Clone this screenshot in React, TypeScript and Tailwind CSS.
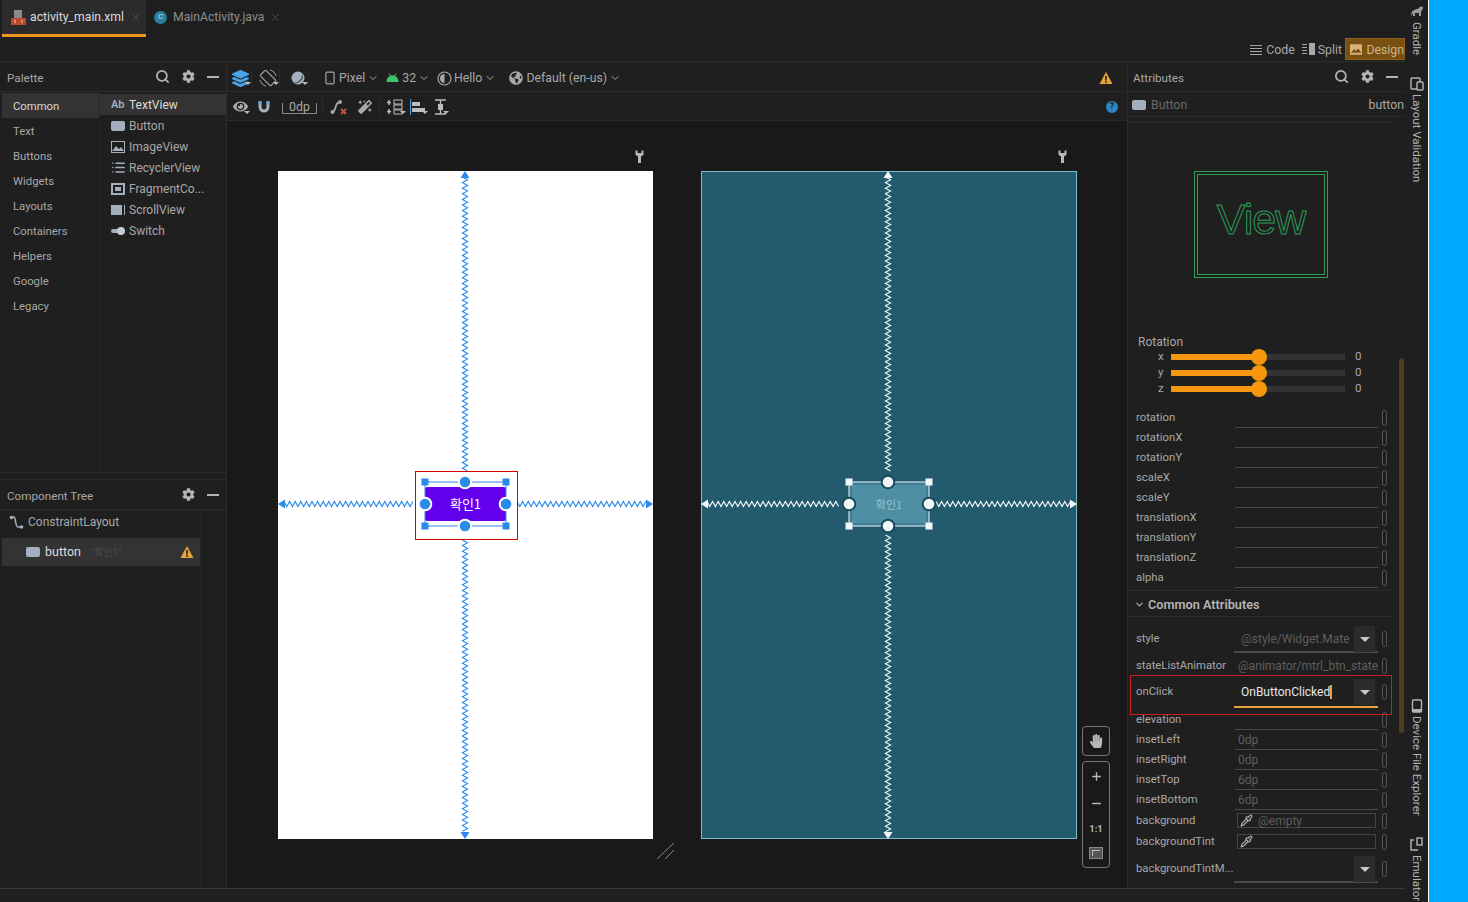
import React from "react";
import { Search, ChevronDown, Smartphone, Minus, Plus, X, Pipette, List } from "lucide-react";
import { FaCog, FaGlobeAmericas, FaHandPaper, FaLayerGroup, FaEye, FaMagic } from "react-icons/fa";

const BLUE = "#2a8cea";

function Warn({ size = 14 }: { size?: number }) {
    return (
        <svg width={size} height={size} viewBox="0 0 14 14">
            <path d="M7 1 L13.5 13 H0.5 Z" fill="#e9a33a" />
            <rect x="6.2" y="5" width="1.6" height="4.4" fill="#1e1e1e" />
            <rect x="6.2" y="10.2" width="1.6" height="1.6" fill="#1e1e1e" />
        </svg>
    );
}

function Caret() {
    return <span className="self-end mb-[6px] -ml-1 w-0 h-0 border-x-[3px] border-x-transparent border-t-[3px] border-t-[#bbbbbb]" />;
}

function BtnIcon() {
    return <span className="block w-[14px] h-[10px] rounded-[2px] bg-[#a3afbd]" />;
}

function Wrench() {
    return (
        <svg width="9" height="13" viewBox="0 0 9 13">
            <path d="M0.5 0.5 H2.5 V3 H6.5 V0.5 H8.5 V4 C8.5 5.5 7 6 6 6.2 V13 H3 V6.2 C2 6 0.5 5.5 0.5 4 Z" fill="#b8b8b8" />
        </svg>
    );
}

function PanelHead({ title, search, tight }: { title: string; search?: boolean; tight?: boolean }) {
    return (
        <div className={`h-[29px] shrink-0 flex items-center pr-[7px] text-[#a8a8a8] text-[11.7px] ${tight ? "pl-[5px]" : "pl-[7px]"}`}>
            <span className="pt-[4px]">{title}</span>
            <div className="ml-auto flex items-center gap-[12px] text-[#b4b4b4]">
                {search && <Search size={15} strokeWidth={2.8} />}
                <FaCog size={13} />
                <span className="block w-[12px] h-[2px] bg-[#b4b4b4]" />
            </div>
        </div>
    );
}

const categories = ["Common", "Text", "Buttons", "Widgets", "Layouts", "Containers", "Helpers", "Google", "Legacy"];

const widgets: { name: string; icon: React.ReactNode }[] = [
    { name: "TextView", icon: <span className="text-[#a3afbd] text-[11px] font-semibold leading-none">Ab</span> },
    { name: "Button", icon: <BtnIcon /> },
    {
        name: "ImageView",
        icon: (
            <svg width="14" height="12" viewBox="0 0 14 12">
                <rect width="14" height="12" fill="#a3afbd" />
                <rect x="1" y="1" width="12" height="10" fill="#1f1f1f" />
                <path d="M1 10 L5 5 L8 8 L10 6 L13 10 Z" fill="#a3afbd" />
            </svg>
        ),
    },
    { name: "RecyclerView", icon: <List size={15} strokeWidth={2.4} color="#a3afbd" /> },
    {
        name: "FragmentCo...",
        icon: (
            <span className="w-[14px] h-[12px] border-2 border-[#a3afbd] flex items-center justify-center">
                <span className="block w-[6px] h-[4px] bg-[#a3afbd]" />
            </span>
        ),
    },
    {
        name: "ScrollView",
        icon: (
            <span className="w-[14px] h-[10px] bg-[#a3afbd] flex justify-end items-stretch">
                <span className="block w-[2px] bg-[#1f1f1f] mr-[1px]" />
            </span>
        ),
    },
    {
        name: "Switch",
        icon: (
            <svg width="14" height="10" viewBox="0 0 14 10">
                <rect y="3" width="8" height="4" rx="2" fill="#a3afbd" />
                <circle cx="10" cy="5" r="4" fill="#c4ccd6" />
            </svg>
        ),
    },
];

function LeftColumn() {
    return (
        <div className="w-[227px] shrink-0 flex flex-col border-r border-[#2b2b2b] bg-[#1f1f1f]">
            <div className="border-b border-[#2b2b2b]">
                <PanelHead title="Palette" search />
            </div>
            <div className="h-[381px] shrink-0 flex pl-[2px] border-b border-[#2b2b2b]">
                <div className="w-[98px] pt-[1px] border-r border-[#262626]">
                    {categories.map((c, i) => (
                        <div
                            key={c}
                            className={`h-[25px] flex items-center pt-[3px] pl-[11px] text-[11.3px] ${i === 0 ? "bg-[#333333] text-[#d8d8d8]" : "text-[#a8a8a8]"}`}
                        >
                            {c}
                        </div>
                    ))}
                </div>
                <div className="flex-1 pt-[2px]">
                    {widgets.map((w, i) => (
                        <div
                            key={w.name}
                            className={`h-[21px] flex items-center pl-[11px] text-[12px] ${i === 0 ? "bg-[#333333] text-[#dddddd]" : "text-[#a8a8a8]"}`}
                        >
                            <span className="w-[18px] flex items-center shrink-0">{w.icon}</span>
                            {w.name}
                        </div>
                    ))}
                </div>
            </div>
            <div className="h-[7px] shrink-0 border-b border-[#2b2b2b]" />
            <div className="border-b border-[#2b2b2b]">
                <PanelHead title="Component Tree" />
            </div>
            <div className="flex-1 flex pl-[2px]">
                <div className="w-[199px] border-r border-[#262626]">
                    <div className="h-[28px] flex items-center pb-[4px] pl-[7px] text-[12px] text-[#a8a8a8]">
                        <svg width="15" height="15" viewBox="0 0 15 15" className="mr-[4px]">
                            <path d="M2 2 H5 C7 2 6 12 9 12 H13" fill="none" stroke="#a3afbd" strokeWidth="1.6" />
                            <circle cx="2.5" cy="2.5" r="1.8" fill="#a3afbd" />
                            <circle cx="12.5" cy="12" r="1.8" fill="#a3afbd" />
                        </svg>
                        ConstraintLayout
                    </div>
                    <div className="h-[28px] flex items-center pl-[24px] pr-[6px] bg-[#333333] text-[12.5px] text-[#dddddd]">
                        <BtnIcon />
                        <span className="ml-[5px]">button</span>
                        <span className="ml-[10px] text-[10px] text-[#4a4a4a]">"확인1"</span>
                        <span className="ml-auto">
                            <Warn />
                        </span>
                    </div>
                </div>
            </div>
        </div>
    );
}

function ToolSep() {
    return <span className="w-px h-[18px] bg-[#2b2b2b]" />;
}

function ToolbarTop() {
    return (
        <div className="h-[30px] shrink-0 flex items-center pt-[3px] pl-[5px] pr-[14px] border-b border-[#2b2b2b] text-[12.3px] text-[#a8a8a8]">
            <FaLayerGroup size={17} color="#4aa3e6" />
            <Caret />
            <ToolSep />
            <svg width="18" height="18" viewBox="0 0 18 18" className="ml-[7px]">
                <rect x="5" y="1.5" width="8" height="15" rx="1" transform="rotate(-45 9 9)" fill="none" stroke="#a8a8a8" strokeWidth="1.1" />
                <path d="M11 0.8 A8.5 8.5 0 0 1 17.2 7 M0.8 11 A8.5 8.5 0 0 0 7 17.2" fill="none" stroke="#a8a8a8" strokeWidth="0.9" />
            </svg>
            <Caret />
            <ToolSep />
            <svg width="15" height="15" viewBox="0 0 15 15" className="ml-[11px]">
                <circle cx="7" cy="7" r="6.5" fill="#a3afbd" />
                <path d="M11 2.5 A6.5 6.5 0 0 1 2.5 11.5 A8 8 0 0 0 11 2.5 Z" fill="#4c535b" />
            </svg>
            <Caret />
            <ToolSep />
            <Smartphone size={14} className="ml-[14px] mr-[2px]" />
            <span>Pixel</span>
            <ChevronDown size={12} className="ml-[2px]" />
            <svg width="13" height="10" viewBox="0 0 13 10" className="ml-[7px] mr-[3px]">
                <path d="M0.5 9 C0.5 5 3 2.5 6.5 2.5 C10 2.5 12.5 5 12.5 9 Z" fill="#3ec46d" />
                <path d="M3 0.5 L4.5 3 M10 0.5 L8.5 3" stroke="#3ec46d" />
            </svg>
            <span>32</span>
            <ChevronDown size={12} className="ml-[2px]" />
            <svg width="15" height="15" viewBox="0 0 15 15" className="ml-[7px] mr-[2px]">
                <circle cx="7.5" cy="7.5" r="6.5" fill="none" stroke="#a8a8a8" strokeWidth="1.2" />
                <path d="M7.5 3 A4.5 4.5 0 0 0 7.5 12 Z" fill="#a8a8a8" />
            </svg>
            <span>Hello</span>
            <ChevronDown size={12} className="ml-[2px]" />
            <FaGlobeAmericas size={14} className="ml-[13px] mr-[3px]" />
            <span>Default (en-us)</span>
            <ChevronDown size={12} className="ml-[2px]" />
            <span className="ml-auto">
                <Warn />
            </span>
        </div>
    );
}

function ToolbarBottom() {
    return (
        <div className="h-[29px] shrink-0 flex items-center pt-[1px] pl-[6px] pr-[9px] border-b border-[#2b2b2b] text-[12.3px] text-[#a8a8a8]">
            <FaEye size={15} />
            <Caret />
            <svg width="14" height="14" viewBox="0 0 14 14" className="ml-[7px]">
                <path d="M1.5 1 H4.5 V7 A2.5 2.5 0 0 0 9.5 7 V1 H12.5 V7 A5.5 5.5 0 0 1 1.5 7 Z" fill="#a3afbd" />
                <rect x="1.5" y="1" width="3" height="2.5" fill="#4aa3e6" />
                <rect x="9.5" y="1" width="3" height="2.5" fill="#4aa3e6" />
            </svg>
            <span className="ml-[11px] w-[35px] h-[11px] mt-[3px] border-b border-x border-[#888888] flex justify-center items-end leading-[11px]">0dp</span>
            <span className="w-[5px]" />
            <ToolSep />
            <svg width="18" height="16" viewBox="0 0 18 16" className="ml-[7px]">
                <path d="M2 13 C7 13 4 3 10 3" fill="none" stroke="#a8a8a8" strokeWidth="1.8" />
                <circle cx="2.5" cy="13" r="2" fill="#a8a8a8" />
                <circle cx="10" cy="3" r="2" fill="#a8a8a8" />
                <path d="M11 10 L16 15 M16 10 L11 15" stroke="#c8524a" strokeWidth="1.8" />
            </svg>
            <FaMagic size={14} className="ml-[10px]" />
            <span className="w-[7px]" />
            <ToolSep />
            <svg width="18" height="18" viewBox="0 0 18 18" className="ml-[6px]">
                <path d="M3 2 V7 M1 4.5 H5 M3 11 V16 M1 13.5 H5" stroke="#bdbdbd" strokeWidth="1.4" />
                <rect x="8" y="2" width="8" height="4" fill="none" stroke="#bdbdbd" />
                <rect x="8" y="7" width="8" height="4" fill="none" stroke="#bdbdbd" />
                <rect x="8" y="12" width="8" height="4" fill="none" stroke="#bdbdbd" />
            </svg>
            <Caret />
            <span className="w-[3px]" />
            <svg width="17" height="16" viewBox="0 0 17 16">
                <rect x="1" y="0" width="1" height="16" fill="#4aa3e6" />
                <rect x="3" y="3" width="8" height="4" fill="#bdbdbd" />
                <rect x="3" y="9" width="13" height="4" fill="#bdbdbd" />
            </svg>
            <Caret />
            <span className="w-[6px]" />
            <svg width="13" height="16" viewBox="0 0 13 16">
                <path d="M1 1 H12 M1 15 H12 M6.5 1 V15" stroke="#bdbdbd" strokeWidth="1.4" />
                <rect x="4" y="5" width="5" height="6" fill="#bdbdbd" />
            </svg>
            <Caret />
            <span className="ml-auto w-[12px] h-[12px] rounded-full bg-[#2f84c4] text-[#102a3c] text-[9px] font-bold flex items-center justify-center">?</span>
        </div>
    );
}

function zigzag(length: number, horizontal: boolean, offset: number, from: number) {
    const pts: string[] = [];
    const step = 2.8;
    for (let i = 0; i * step <= length; i++) {
        const along = from + i * step;
        const across = offset + (i % 2 === 0 ? -2.6 : 2.6);
        pts.push(horizontal ? `${along},${across}` : `${across},${along}`);
    }
    return pts.join(" ");
}

function Spring({ color, from, to, at, horizontal }: { color: string; from: number; to: number; at: number; horizontal?: boolean }) {
    return <polyline points={zigzag(to - from, !!horizontal, at, from)} fill="none" stroke={color} strokeWidth="1.1" />;
}

function Blueprint({ color, halo, width }: { color: string; halo: string; width: number }) {
    const cx = 187;
    const cy = 333;
    const left = width === 375 ? 147 : 148;
    const right = 228;
    const circles = [
        [cx, 311],
        [left, cy],
        [right, cy],
        [cx, 355],
    ];
    const corners = [
        [left, 311],
        [right, 311],
        [left, 355],
        [right, 355],
    ];
    return (
        <svg width={width} height="668" viewBox={`0 0 ${width} 668`} className="absolute inset-0">
            <Spring color={color} from={6} to={300} at={cx} />
            <Spring color={color} from={width === 375 ? 369 : 364} to={662} at={cx} />
            <Spring color={color} from={6} to={width === 375 ? 137 : 139} at={cy} horizontal />
            <Spring color={color} from={width === 375 ? 239 : 235} to={width - 6} at={cy} horizontal />
            <path d={`M${cx} 0 L${cx + 4.5} 7 H${cx - 4.5} Z`} fill={color} />
            <path d={`M${cx} 668 L${cx + 4.5} 661 H${cx - 4.5} Z`} fill={color} />
            <path d={`M0 ${cy} L7 ${cy - 4.5} V${cy + 4.5} Z`} fill={color} />
            <path d={`M${width} ${cy} L${width - 7} ${cy - 4.5} V${cy + 4.5} Z`} fill={color} />
            <rect x={left} y="311" width={right - left} height="44" fill="none" stroke={color} strokeWidth="1" />
            {corners.map(([x, y]) => (
                <rect key={`${x}-${y}`} x={x - 3.5} y={y - 3.5} width="7" height="7" fill={color} />
            ))}
            {circles.map(([x, y]) => (
                <circle key={`${x}-${y}`} cx={x} cy={y} r="6.3" fill={color} stroke={halo} strokeWidth="2" />
            ))}
        </svg>
    );
}

function Canvas() {
    return (
        <div className="relative flex-1 flex gap-[48px] pl-[51px] bg-[#191919] overflow-hidden">
            <div className="flex flex-col items-end">
                <div className="h-[50px] flex items-end pb-[8px] pr-[9px]">
                    <Wrench />
                </div>
                <div className="relative w-[375px] h-[668px] bg-white">
                    <div className="absolute left-[147px] top-[316px] w-[81px] h-[34px] rounded-[2px] bg-[#6200ee] flex items-center justify-center text-white text-[13px] font-['Noto_Sans_CJK_KR','Noto_Sans',sans-serif]">
                        확인1
                    </div>
                    <Blueprint color={BLUE} halo="#ffffff" width={375} />
                    <div className="absolute left-[137px] top-[300px] w-[103px] h-[69px] border border-[#dd0000]" />
                </div>
            </div>
            <div className="flex flex-col items-end">
                <div className="h-[50px] flex items-end pb-[8px] pr-[10px]">
                    <Wrench />
                </div>
                <div className="relative w-[376px] h-[668px] bg-[#235a6e] border border-[#7fbccb]">
                    <div className="absolute left-[147px] top-[310px] w-[80px] h-[44px] bg-[#4f8fa4] border-[3px] border-[#3f7d92] flex items-center justify-center text-[#93c3cf] text-[11px] font-['Noto_Sans_CJK_KR','Noto_Sans',sans-serif]">
                        확인1
                    </div>
                    <div className="absolute -left-px -top-px">
                        <Blueprint color="#f2f8fa" halo="#1b4a5b" width={376} />
                    </div>
                </div>
            </div>
            <svg width="20" height="18" viewBox="0 0 20 18" className="absolute left-[429px] top-[721px]">
                <path d="M1 17 L18 1 M9 17 L18 8" stroke="#8a8a8a" strokeWidth="1" />
            </svg>
            <div className="absolute left-[855px] top-[605px] flex flex-col gap-[5px] text-[#b8b8b8]">
                <div className="w-[28px] h-[30px] border border-[#777777] rounded-[4px] flex items-center justify-center">
                    <FaHandPaper size={14} />
                </div>
                <div className="w-[28px] h-[107px] border border-[#777777] rounded-[4px] flex flex-col items-center justify-around py-[1px]">
                    <Plus size={13} strokeWidth={2.6} />
                    <Minus size={13} strokeWidth={2.6} />
                    <span className="text-[9.5px] font-bold leading-none">1:1</span>
                    <span className="w-[14px] h-[12px] bg-[#555555] border border-[#888888] flex items-center justify-center">
                        <span className="block w-[8px] h-[6px] border-l border-t border-[#bdbdbd]" />
                    </span>
                </div>
            </div>
        </div>
    );
}

function Indicator() {
    return <span className="block w-[5px] h-[16px] border border-[#555555] rounded-[3px]" />;
}

function Slider({ label }: { label: string }) {
    return (
        <div className="h-[16px] flex items-center text-[11.5px] text-[#a8a8a8]">
            <span className="w-[33px] pl-[20px]">{label}</span>
            <div className="relative w-[174px] h-[6px] bg-[#333333]">
                <div className="w-[88px] h-full bg-[#f5960f]" />
                <span className="absolute left-[80px] -top-[5px] w-[16px] h-[16px] rounded-full bg-[#f5960f]" />
            </div>
            <span className="ml-[10px]">0</span>
        </div>
    );
}

function AttrRow({ name, value }: { name: string; value?: string }) {
    return (
        <div className="h-[20px] shrink-0 flex items-center pl-[8px] pr-[18px] text-[11.3px] text-[#a8a8a8]">
            <span className="w-[99px] shrink-0 pt-[1px]">{name}</span>
            <span className="w-[143px] h-full border-b border-[#4a4a4a] pl-[3px] text-[#5e5e5e] text-[12px] leading-[20px]">{value}</span>
            <span className="ml-auto">
                <Indicator />
            </span>
        </div>
    );
}

function DropTriangle() {
    return <span className="w-0 h-0 border-x-[5px] border-x-transparent border-t-[5px] border-t-[#c8c8c8]" />;
}

function Dropdown({ name, value, active }: { name: string; value?: string; active?: boolean }) {
    return (
        <div className="shrink-0 flex items-start pl-[8px] pr-[18px] text-[11.3px] text-[#a8a8a8]">
            <span className="w-[98px] shrink-0 h-[26px] pt-[1px] flex items-center">{name}</span>
            <div className={`w-[144px] flex border-b-2 ${active ? "h-[29px] border-[#e8a33a]" : "h-[27px] border-[#4a4a4a]"}`}>
                <span className={`flex-1 h-[26px] flex items-center pl-[7px] text-[12px] ${active ? "text-[#e6e6e6]" : "text-[#5e5e5e]"}`}>
                    {value}
                    {active && <span className="w-[2px] h-[14px] bg-[#e8a33a]" />}
                </span>
                <span className="w-[21px] h-[26px] mr-[3px] bg-[#2b2b2b] flex items-center justify-center">
                    <DropTriangle />
                </span>
            </div>
            <span className="ml-auto mt-[5px]">
                <Indicator />
            </span>
        </div>
    );
}

function ColorRow({ name, value }: { name: string; value?: string }) {
    return (
        <div className="h-[21px] shrink-0 flex items-center pl-[8px] pr-[18px] text-[11.3px] text-[#a8a8a8]">
            <span className="w-[101px] shrink-0 pt-[1px]">{name}</span>
            <span className="w-[139px] h-[15px] border border-[#444444] flex items-center pl-[2px] gap-[5px] text-[#5e5e5e] text-[12px]">
                <Pipette size={13} color="#b8b8b8" />
                {value}
            </span>
            <span className="ml-auto">
                <Indicator />
            </span>
        </div>
    );
}

function Attributes() {
    const transforms = ["rotation", "rotationX", "rotationY", "scaleX", "scaleY", "translationX", "translationY", "translationZ", "alpha"];
    return (
        <div className="relative w-[278px] shrink-0 flex flex-col bg-[#1f1f1f] border-l border-[#2b2b2b] overflow-hidden">
            <div className="border-b border-[#2b2b2b]">
                <PanelHead title="Attributes" search tight />
            </div>
            <div className="h-[25px] shrink-0 flex items-center pt-[2px] pl-[4px] pr-[1px] text-[12.3px] text-[#6a6a6a] border-b border-[#2b2b2b]">
                <BtnIcon />
                <span className="ml-[5px]">Button</span>
                <span className="ml-auto text-[#a8a8a8]">button</span>
            </div>
            <div className="h-[6px] shrink-0 mr-[13px] border-b border-[#2b2b2b]" />
            <div className="h-[212px] shrink-0 pt-[48px] pl-[66px]">
                <div className="w-[134px] h-[107px] border border-[#2c9c57] p-[2px]">
                    <div className="w-full h-full border border-[#2c9c57] flex items-center justify-center pb-[10px] text-[43px] tracking-[-1px] text-transparent font-['Liberation_Sans',sans-serif] [-webkit-text-stroke:1px_#2c9c57]">
                        View
                    </div>
                </div>
            </div>
            <div className="h-[14px] shrink-0 flex items-center pl-[10px] text-[12px] text-[#a8a8a8]">Rotation</div>
            <div className="shrink-0 pl-[10px]">
                <Slider label="x" />
                <Slider label="y" />
                <Slider label="z" />
            </div>
            <div className="h-[11px] shrink-0" />
            {transforms.map((t) => (
                <AttrRow key={t} name={t} />
            ))}
            <div className="h-[3px] shrink-0 mr-[13px] border-b border-[#2b2b2b]" />
            <div className="h-[26px] shrink-0 mr-[13px] flex items-center pt-[2px] pl-[6px] gap-[3px] border-b border-[#2b2b2b] text-[12.7px] font-semibold text-[#b4b4b4]">
                <ChevronDown size={11} strokeWidth={2.5} />
                Common Attributes
            </div>
            <div className="pt-[9px] shrink-0">
                <Dropdown name="style" value="@style/Widget.Mate" />
            </div>
            <div className="h-[26px] shrink-0 flex items-center pl-[8px] pr-[18px] text-[11.3px] text-[#a8a8a8]">
                <span className="w-[99px] shrink-0 pt-[1px] whitespace-nowrap">stateListAnimator</span>
                <span className="w-[143px] h-full pl-[3px] text-[#5e5e5e] text-[12px] leading-[26px] whitespace-nowrap">@animator/mtrl_btn_state</span>
                <span className="ml-auto">
                    <Indicator />
                </span>
            </div>
            <Dropdown name="onClick" value="OnButtonClicked" active />
            <div className="h-[2px] shrink-0" />
            <AttrRow name="elevation" />
            <AttrRow name="insetLeft" value="0dp" />
            <AttrRow name="insetRight" value="0dp" />
            <AttrRow name="insetTop" value="6dp" />
            <AttrRow name="insetBottom" value="6dp" />
            <ColorRow name="background" value="@empty" />
            <ColorRow name="backgroundTint" />
            <div className="pt-[4px] shrink-0">
                <Dropdown name="backgroundTintM..." />
            </div>
            <div className="absolute left-[2px] top-[613px] w-[262px] h-[40px] border border-[#c8201e]" />
            <div className="absolute left-[271px] top-[296px] w-[5px] h-[375px] rounded-[3px] bg-[#4d3c20]" />
        </div>
    );
}

function RightStrip() {
    const label = "[writing-mode:vertical-rl] text-[11.5px] text-[#b4b4b4] leading-[14px] whitespace-nowrap shrink-0";
    return (
        <div className="w-[23px] shrink-0 flex flex-col items-center bg-[#1f1f1f] overflow-hidden">
            <svg width="14" height="12" viewBox="0 0 14 12" className="mt-[5px] shrink-0">
                <path d="M1 11 C1 6 4 4 8 4 C9 2 11 1 13 2 C13 5 11 6 11 7 V11 H9 V8 H5 V11 H3 V8 Z" fill="#9a9a9a" />
            </svg>
            <span className={`${label} mt-[5px]`}>Gradle</span>
            <svg width="14" height="14" viewBox="0 0 14 14" className="mt-[22px] shrink-0">
                <rect x="1" y="1" width="9" height="11" rx="1" fill="none" stroke="#b4b4b4" strokeWidth="1.4" />
                <rect x="7" y="5" width="6" height="8" rx="1" fill="#1f1f1f" stroke="#b4b4b4" strokeWidth="1.4" />
            </svg>
            <span className={`${label} mt-[3px]`}>Layout Validation</span>
            <svg width="12" height="14" viewBox="0 0 12 14" className="mt-[516px] shrink-0">
                <rect x="1.5" y="1" width="9" height="12" rx="1" fill="none" stroke="#b4b4b4" strokeWidth="1.4" />
                <rect x="1.5" y="10" width="9" height="3" fill="#b4b4b4" />
            </svg>
            <span className={`${label} mt-[3px]`}>Device File Explorer</span>
            <svg width="14" height="15" viewBox="0 0 14 15" className="mt-[22px] shrink-0">
                <path d="M4 3 H1 V13 H8" fill="none" stroke="#b4b4b4" strokeWidth="1.4" />
                <rect x="7" y="1" width="5" height="7" fill="none" stroke="#b4b4b4" strokeWidth="1.4" />
            </svg>
            <span className={`${label} mt-[3px]`}>Emulator</span>
        </div>
    );
}

function TabBar() {
    return (
        <div className="h-[37px] shrink-0 flex items-stretch pl-[2px] bg-[#1e1e1e] text-[12.2px]">
            <div className="w-[144px] flex items-center pl-[9px] bg-[#2b2b2b] border-b-[3px] border-[#f0961e] text-[#dcdcdc]">
                <svg width="15" height="15" viewBox="0 0 15 15" className="mr-[4px]">
                    <path d="M3 0 H11 V8 H3 Z" fill="#8c8c8c" />
                    <rect x="0" y="8" width="15" height="7" fill="#b8492a" />
                    <path d="M5 10 L3 11.5 L5 13 M10 10 L12 11.5 L10 13" fill="none" stroke="#e6c8b8" />
                </svg>
                activity_main.xml
                <X size={11} color="#555555" className="ml-[6px]" />
            </div>
            <div className="flex items-center pl-[8px] pb-[3px] text-[#8e8e8e]">
                <span className="w-[13px] h-[13px] rounded-full bg-[#2a7f9e] text-[#c0dbe6] text-[8px] leading-none flex items-center justify-center mr-[6px]">C</span>
                MainActivity.java
                <X size={11} color="#555555" className="ml-[6px]" />
            </div>
        </div>
    );
}

function ViewSwitch() {
    return (
        <div className="h-[25px] shrink-0 flex items-center justify-end border-b border-[#2b2b2b] text-[12.3px] text-[#a8a8a8] bg-[#1f1f1f]">
            <svg width="12" height="12" viewBox="0 0 12 12" className="mr-[4px] mt-[1px]">
                <path d="M0 1.5 H12 M0 4.5 H12 M0 7.5 H12 M0 10.5 H12" stroke="#a8a8a8" strokeWidth="1.2" />
            </svg>
            <span className="pt-[2px]">Code</span>
            <svg width="13" height="12" viewBox="0 0 13 12" className="ml-[7px] mr-[3px]">
                <path d="M0 1.5 H5 M0 4.5 H5 M0 7.5 H5 M0 10.5 H5" stroke="#a8a8a8" strokeWidth="1.2" />
                <rect x="7" y="0" width="6" height="12" fill="#a8a8a8" />
            </svg>
            <span className="pt-[2px]">Split</span>
            <div className="ml-[3px] w-[60px] h-[22px] flex items-center pl-[4px] gap-[4px] bg-[#7a4f12] border border-[#8f6018] text-[#c9b68f]">
                <svg width="13" height="11" viewBox="0 0 13 11">
                    <rect width="13" height="11" fill="#d8b27a" />
                    <path d="M1 9 L4.5 5 L6.5 7 L8.5 4.5 L12 9 Z" fill="#7a4f12" />
                </svg>
                <span className="pt-[2px]">Design</span>
            </div>
        </div>
    );
}

export default function App() {
    return (
        <div className="w-[1468px] h-[902px] flex overflow-hidden bg-[#1f1f1f] font-['Roboto','Noto_Sans_CJK_KR',sans-serif]">
            <div className="w-[1405px] shrink-0 flex flex-col">
                <TabBar />
                <ViewSwitch />
                <div className="flex-1 min-h-0 flex">
                    <LeftColumn />
                    <div className="w-[900px] shrink-0 flex flex-col bg-[#1f1f1f]">
                        <ToolbarTop />
                        <ToolbarBottom />
                        <Canvas />
                    </div>
                    <Attributes />
                </div>
                <div className="h-[14px] shrink-0 bg-[#202020] border-t border-[#3a3a3a]" />
            </div>
            <RightStrip />
            <div className="flex-1 bg-[#00aaff] border-l border-white" />
        </div>
    );
}
